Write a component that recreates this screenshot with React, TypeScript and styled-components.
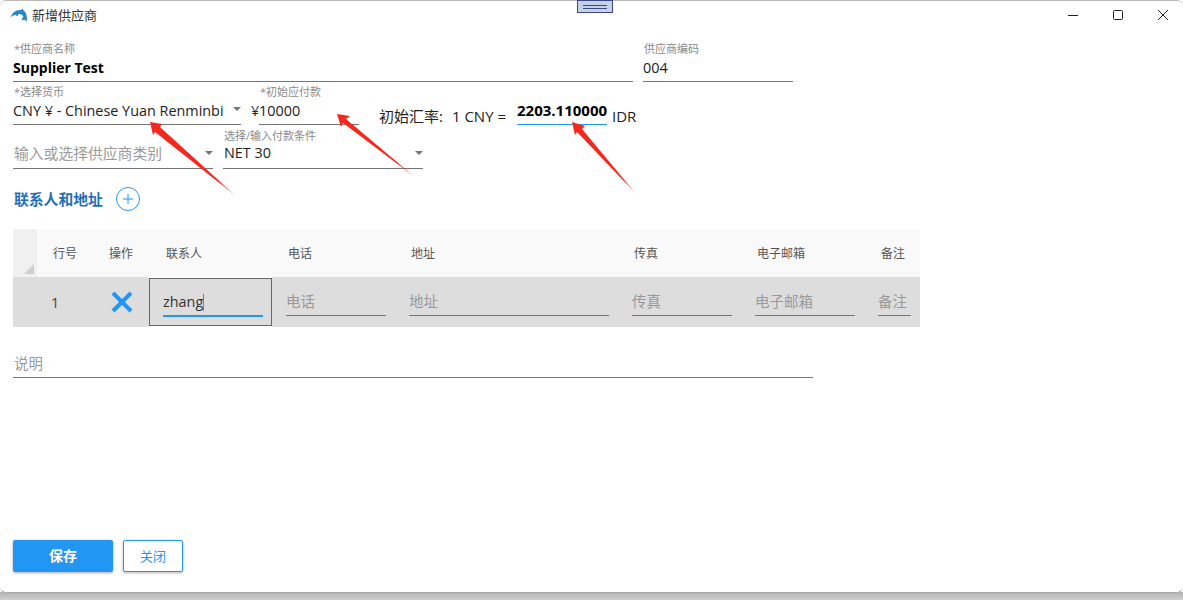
import styled, { createGlobalStyle } from "styled-components";

const GlobalStyle = createGlobalStyle`
  html, body {
    margin: 0;
    padding: 0;
    background: #ffffff;
  }
  body {
    font-family: "Open Sans", "Noto Sans CJK SC", sans-serif;
    color: #222222;
  }
`;

const columns = [
  { title: "行号", indent: 16 },
  { title: "操作", indent: 12 },
  { title: "联系人", indent: 17 },
  { title: "电话", indent: 16 },
  { title: "地址", indent: 16 },
  { title: "传真", indent: 16 },
  { title: "电子邮箱", indent: 16 },
  { title: "备注", indent: 17 },
];

const placeholders = ["电话", "地址", "传真", "电子邮箱", "备注"];

const arrows = [
  { id: "a1", points: "150,122 162,124 160,127 237,197 155,132 153,135", x1: 155, y1: 127, x2: 237, y2: 197 },
  { id: "a2", points: "337,114 350,116 346,119 416,178 343,123 341,127", x1: 342, y1: 119, x2: 416, y2: 178 },
  { id: "a3", points: "572,122 585,126 582,129 637,195 577,132 575,135", x1: 578, y1: 128, x2: 637, y2: 195 },
];

const Dolphin = () => (
  <svg width="18" height="14" viewBox="0 0 18 14">
    <path
      d="M0.5 9.5C2 4.5 6 1.5 11 2L12.5 0.5L13.5 2.6C15.5 3.8 16.5 6 16.8 9C17 11 17 12.5 16.6 13.5L14.4 11.4L11.6 12.4C12 10.8 12.6 9.6 13.4 8.8C12.4 6.8 10.5 5.8 8.4 6.2L7.6 8.4L5.4 6.8C3.6 7.2 2 8.2 0.5 9.5Z"
      fill="#2a86c4"
    />
  </svg>
);

export default function App() {
  return (
    <Page>
      <GlobalStyle />
      <Window>
        <Handle />
        <TitleBar>
          <TitleGroup>
            <Dolphin />
            <TitleText>新增供应商</TitleText>
          </TitleGroup>
          <WindowControls>
            <svg width="12" height="12" viewBox="0 0 12 12">
              <path d="M1 6.5H11" stroke="#222" strokeWidth="1" fill="none" />
            </svg>
            <svg width="12" height="12" viewBox="0 0 12 12">
              <rect x="1.5" y="1.5" width="9" height="9" rx="1" stroke="#222" fill="none" />
            </svg>
            <svg width="12" height="12" viewBox="0 0 12 12">
              <path d="M1 1L11 11M11 1L1 11" stroke="#222" fill="none" />
            </svg>
          </WindowControls>
        </TitleBar>

        <Form>
          <NameRow>
            <Field $width={620}>
              <FieldLabel>*供应商名称</FieldLabel>
              <FieldValue $bold>Supplier Test</FieldValue>
            </Field>
            <Field $width={150}>
              <FieldLabel>供应商编码</FieldLabel>
              <FieldValue>004</FieldValue>
            </Field>
          </NameRow>

          <CurrencyRow>
            <Field $width={228}>
              <FieldLabel>*选择货币</FieldLabel>
              <FieldValue>
                CNY ¥ - Chinese Yuan Renminbi
                <Caret />
              </FieldValue>
            </Field>
            <AmountBox>
              <Yen>¥</Yen>
              <Field $width={100}>
                <FieldLabel>*初始应付款</FieldLabel>
                <FieldValue>10000</FieldValue>
              </Field>
            </AmountBox>
            <RateBox>
              <RateText>初始汇率:</RateText>
              <RateText>1 CNY =</RateText>
              <RateValue>2203.110000</RateValue>
              <RateCode>IDR</RateCode>
            </RateBox>
          </CurrencyRow>

          <TermsRow>
            <Field $width={200}>
              <FieldValue $muted>
                输入或选择供应商类别
                <Caret />
              </FieldValue>
            </Field>
            <Field $width={200}>
              <FieldLabel>选择/输入付款条件</FieldLabel>
              <FieldValue>
                NET 30
                <Caret />
              </FieldValue>
            </Field>
          </TermsRow>

          <SectionHead>
            <SectionTitle>联系人和地址</SectionTitle>
            <AddButton>
              <svg width="10" height="10" viewBox="0 0 10 10">
                <path d="M5 0V10M0 5H10" stroke="#2196f3" fill="none" />
              </svg>
            </AddButton>
          </SectionHead>

          <Table>
            <CornerCell>
              <CornerMark />
            </CornerCell>
            {columns.map((col) => (
              <HeadCell key={col.title} $indent={col.indent}>
                {col.title}
              </HeadCell>
            ))}
            <RowGutter />
            <NumberCell>1</NumberCell>
            <ActionCell>
              <svg width="22" height="22" viewBox="0 0 22 22">
                <path d="M2 2L20 20M20 2L2 20" stroke="#2196f3" strokeWidth="4" fill="none" />
              </svg>
            </ActionCell>
            <EditingCell>
              <ActiveInput>
                zhang
                <TextCursor />
              </ActiveInput>
            </EditingCell>
            {placeholders.map((text) => (
              <InputCell key={text}>
                <CellInput>{text}</CellInput>
              </InputCell>
            ))}
          </Table>

          <NoteField>说明</NoteField>
        </Form>

        <Footer>
          <SaveButton>保存</SaveButton>
          <CloseButton>关闭</CloseButton>
        </Footer>

        <ArrowLayer width="1183" height="600" viewBox="0 0 1183 600">
          <defs>
            {arrows.map((a) => (
              <linearGradient
                key={a.id}
                id={a.id}
                gradientUnits="userSpaceOnUse"
                x1={a.x1}
                y1={a.y1}
                x2={a.x2}
                y2={a.y2}
              >
                <stop offset="0.75" stopColor="#f5281e" />
                <stop offset="1" stopColor="#f5281e" stopOpacity="0.25" />
              </linearGradient>
            ))}
          </defs>
          {arrows.map((a) => (
            <polygon key={a.id} points={a.points} fill={`url(#${a.id})`} />
          ))}
        </ArrowLayer>
      </Window>
    </Page>
  );
}

const Page = styled.div`
  height: 600px;
  overflow: hidden;
  background: linear-gradient(#b4b4b4, #d0d0d0) bottom / 100% 8px no-repeat;
`;

const Window = styled.div`
  position: relative;
  box-sizing: border-box;
  width: 1183px;
  height: 593px;
  background: #ffffff;
  border-top: 1px solid #b9b9b9;
  border-bottom: 1px solid #a8a8a8;
  border-radius: 6px;
  display: flex;
  flex-direction: column;
`;

const Handle = styled.div`
  position: absolute;
  top: -1px;
  left: 577px;
  box-sizing: border-box;
  width: 36px;
  height: 13px;
  background: #c5d0ea;
  border: 1px solid #3a4a80;
  &::after {
    content: "";
    position: absolute;
    left: 5px;
    right: 5px;
    top: 4px;
    height: 2px;
    border-top: 1px solid #3a4a80;
    border-bottom: 1px solid #3a4a80;
  }
`;

const TitleBar = styled.div`
  height: 28px;
  flex: none;
  padding: 0 14px 0 10px;
  display: flex;
  align-items: center;
  justify-content: space-between;
`;

const TitleGroup = styled.div`
  display: flex;
  align-items: center;
  gap: 4px;
`;

const TitleText = styled.span`
  font-size: 13px;
  color: #333333;
  margin-bottom: 2px;
`;

const WindowControls = styled.div`
  display: flex;
  gap: 33px;
  align-items: center;
`;

const Form = styled.div`
  flex: none;
  padding: 0 13px;
  display: flex;
  flex-direction: column;
`;

const Field = styled.div<{ $width: number }>`
  width: ${(p) => p.$width}px;
  flex: none;
  display: flex;
  flex-direction: column;
`;

const FieldLabel = styled.div`
  font-size: 11px;
  line-height: 12px;
  color: #8a8a8a;
  padding-left: 1px;
  white-space: nowrap;
`;

const FieldValue = styled.div<{ $bold?: boolean; $muted?: boolean }>`
  position: relative;
  height: 26px;
  line-height: 25px;
  font-size: ${(p) => (p.$bold ? 14 : p.$muted ? 14.8 : 14.4)}px;
  font-weight: ${(p) => (p.$bold ? 700 : 400)};
  color: ${(p) => (p.$bold ? "#000000" : p.$muted ? "#9a9a9a" : "#222222")};
  border-bottom: 1px solid #757575;
  white-space: nowrap;
`;

const Caret = styled.span`
  position: absolute;
  right: 0;
  top: 9px;
  width: 0;
  height: 0;
  border-left: 4px solid transparent;
  border-right: 4px solid transparent;
  border-top: 4px solid #757575;
`;

const NameRow = styled.div`
  margin-top: 14px;
  display: flex;
  gap: 10px;
`;

const CurrencyRow = styled.div`
  margin-top: 4px;
  display: flex;
  align-items: flex-end;
`;

const AmountBox = styled.div`
  margin-left: 10px;
  display: flex;
  align-items: flex-end;
`;

const Yen = styled.span`
  font-size: 14.4px;
  line-height: 25px;
  padding-bottom: 2px;
  width: 8px;
`;

const RateBox = styled.div`
  margin-left: 20px;
  display: flex;
  align-items: flex-end;
  height: 27px;
`;

const RateText = styled.span`
  font-size: 15px;
  line-height: 18px;
  margin-right: 9px;
  white-space: nowrap;
`;

const RateValue = styled.span`
  width: 90px;
  height: 26px;
  margin-left: 2px;
  border-bottom: 1px solid #2196f3;
  font-size: 15px;
  font-weight: 700;
  line-height: 25px;
  color: #000000;
  white-space: nowrap;
`;

const RateCode = styled.span`
  font-size: 15px;
  line-height: 18px;
  margin-left: 5px;
`;

const TermsRow = styled.div`
  margin-top: 5px;
  display: flex;
  align-items: flex-end;
  gap: 10px;
  ${FieldValue} {
    line-height: 22px;
    padding-left: 1px;
  }
`;

const SectionHead = styled.div`
  margin-top: 18px;
  padding-left: 1px;
  height: 24px;
  display: flex;
  align-items: center;
  gap: 13px;
`;

const SectionTitle = styled.span`
  font-size: 14.8px;
  font-weight: 700;
  color: #1e6fb8;
  margin-bottom: 2px;
`;

const AddButton = styled.span`
  box-sizing: border-box;
  width: 24px;
  height: 24px;
  border: 1px solid #2196f3;
  border-radius: 50%;
  display: flex;
  align-items: center;
  justify-content: center;
`;

const Table = styled.div`
  margin-top: 18px;
  width: 907px;
  display: grid;
  grid-template-columns: 24px 60px 52px 123px 123px 223px 123px 123px 56px;
  grid-template-rows: 48px 50px;
`;

const CornerCell = styled.div`
  position: relative;
  background: #f0f0f0;
`;

const CornerMark = styled.span`
  position: absolute;
  right: 3px;
  bottom: 3px;
  width: 0;
  height: 0;
  border-left: 10px solid transparent;
  border-bottom: 10px solid #cfcfcf;
`;

const HeadCell = styled.div<{ $indent: number }>`
  background: #f9f9f9;
  padding-left: ${(p) => p.$indent}px;
  font-size: 12px;
  line-height: 49px;
  color: #555555;
  white-space: nowrap;
`;

const BodyCell = styled.div`
  background: #dddddd;
  display: flex;
  align-items: center;
`;

const RowGutter = styled(BodyCell)``;

const NumberCell = styled(BodyCell)`
  padding-left: 14px;
  font-size: 14.4px;
  color: #444444;
`;

const ActionCell = styled(BodyCell)`
  padding-left: 14px;
`;

const EditingCell = styled(BodyCell)`
  box-sizing: border-box;
  margin: 1px 0;
  border: 1px solid #666666;
  padding: 0 8px 0 13px;
`;

const ActiveInput = styled.div`
  width: 100%;
  height: 25px;
  margin-top: 2px;
  font-size: 14.4px;
  line-height: 23px;
  color: #333333;
  border-bottom: 2px solid #2196f3;
  display: flex;
`;

const TextCursor = styled.span`
  width: 1px;
  height: 17px;
  margin-top: 4px;
  background: #2196f3;
`;

const InputCell = styled(BodyCell)`
  padding: 0 9px 0 14px;
`;

const CellInput = styled.div`
  width: 100%;
  height: 25px;
  margin-top: 2px;
  font-size: 14.5px;
  line-height: 23px;
  color: #999999;
  border-bottom: 1px solid #757575;
  overflow: hidden;
  white-space: nowrap;
`;

const NoteField = styled.div`
  margin-top: 25px;
  width: 799px;
  height: 25px;
  padding-left: 1px;
  font-size: 14.5px;
  line-height: 24px;
  color: #999999;
  border-bottom: 1px solid #757575;
`;

const Footer = styled.div`
  margin-top: auto;
  padding: 0 13px 20px;
  display: flex;
  gap: 10px;
`;

const SaveButton = styled.div`
  width: 100px;
  height: 32px;
  background: #2196f3;
  border-radius: 2px;
  color: #ffffff;
  font-size: 14px;
  font-weight: 700;
  line-height: 32px;
  text-align: center;
  box-shadow: 0 1px 3px rgba(0, 0, 0, 0.35);
`;

const CloseButton = styled.div`
  box-sizing: border-box;
  width: 60px;
  height: 32px;
  background: #ffffff;
  border: 1px solid #2196f3;
  border-radius: 2px;
  color: #2196f3;
  font-size: 13px;
  line-height: 30px;
  text-align: center;
  box-shadow: 0 1px 3px rgba(0, 0, 0, 0.3);
`;

const ArrowLayer = styled.svg`
  position: absolute;
  top: -1px;
  left: 0;
  pointer-events: none;
`;
